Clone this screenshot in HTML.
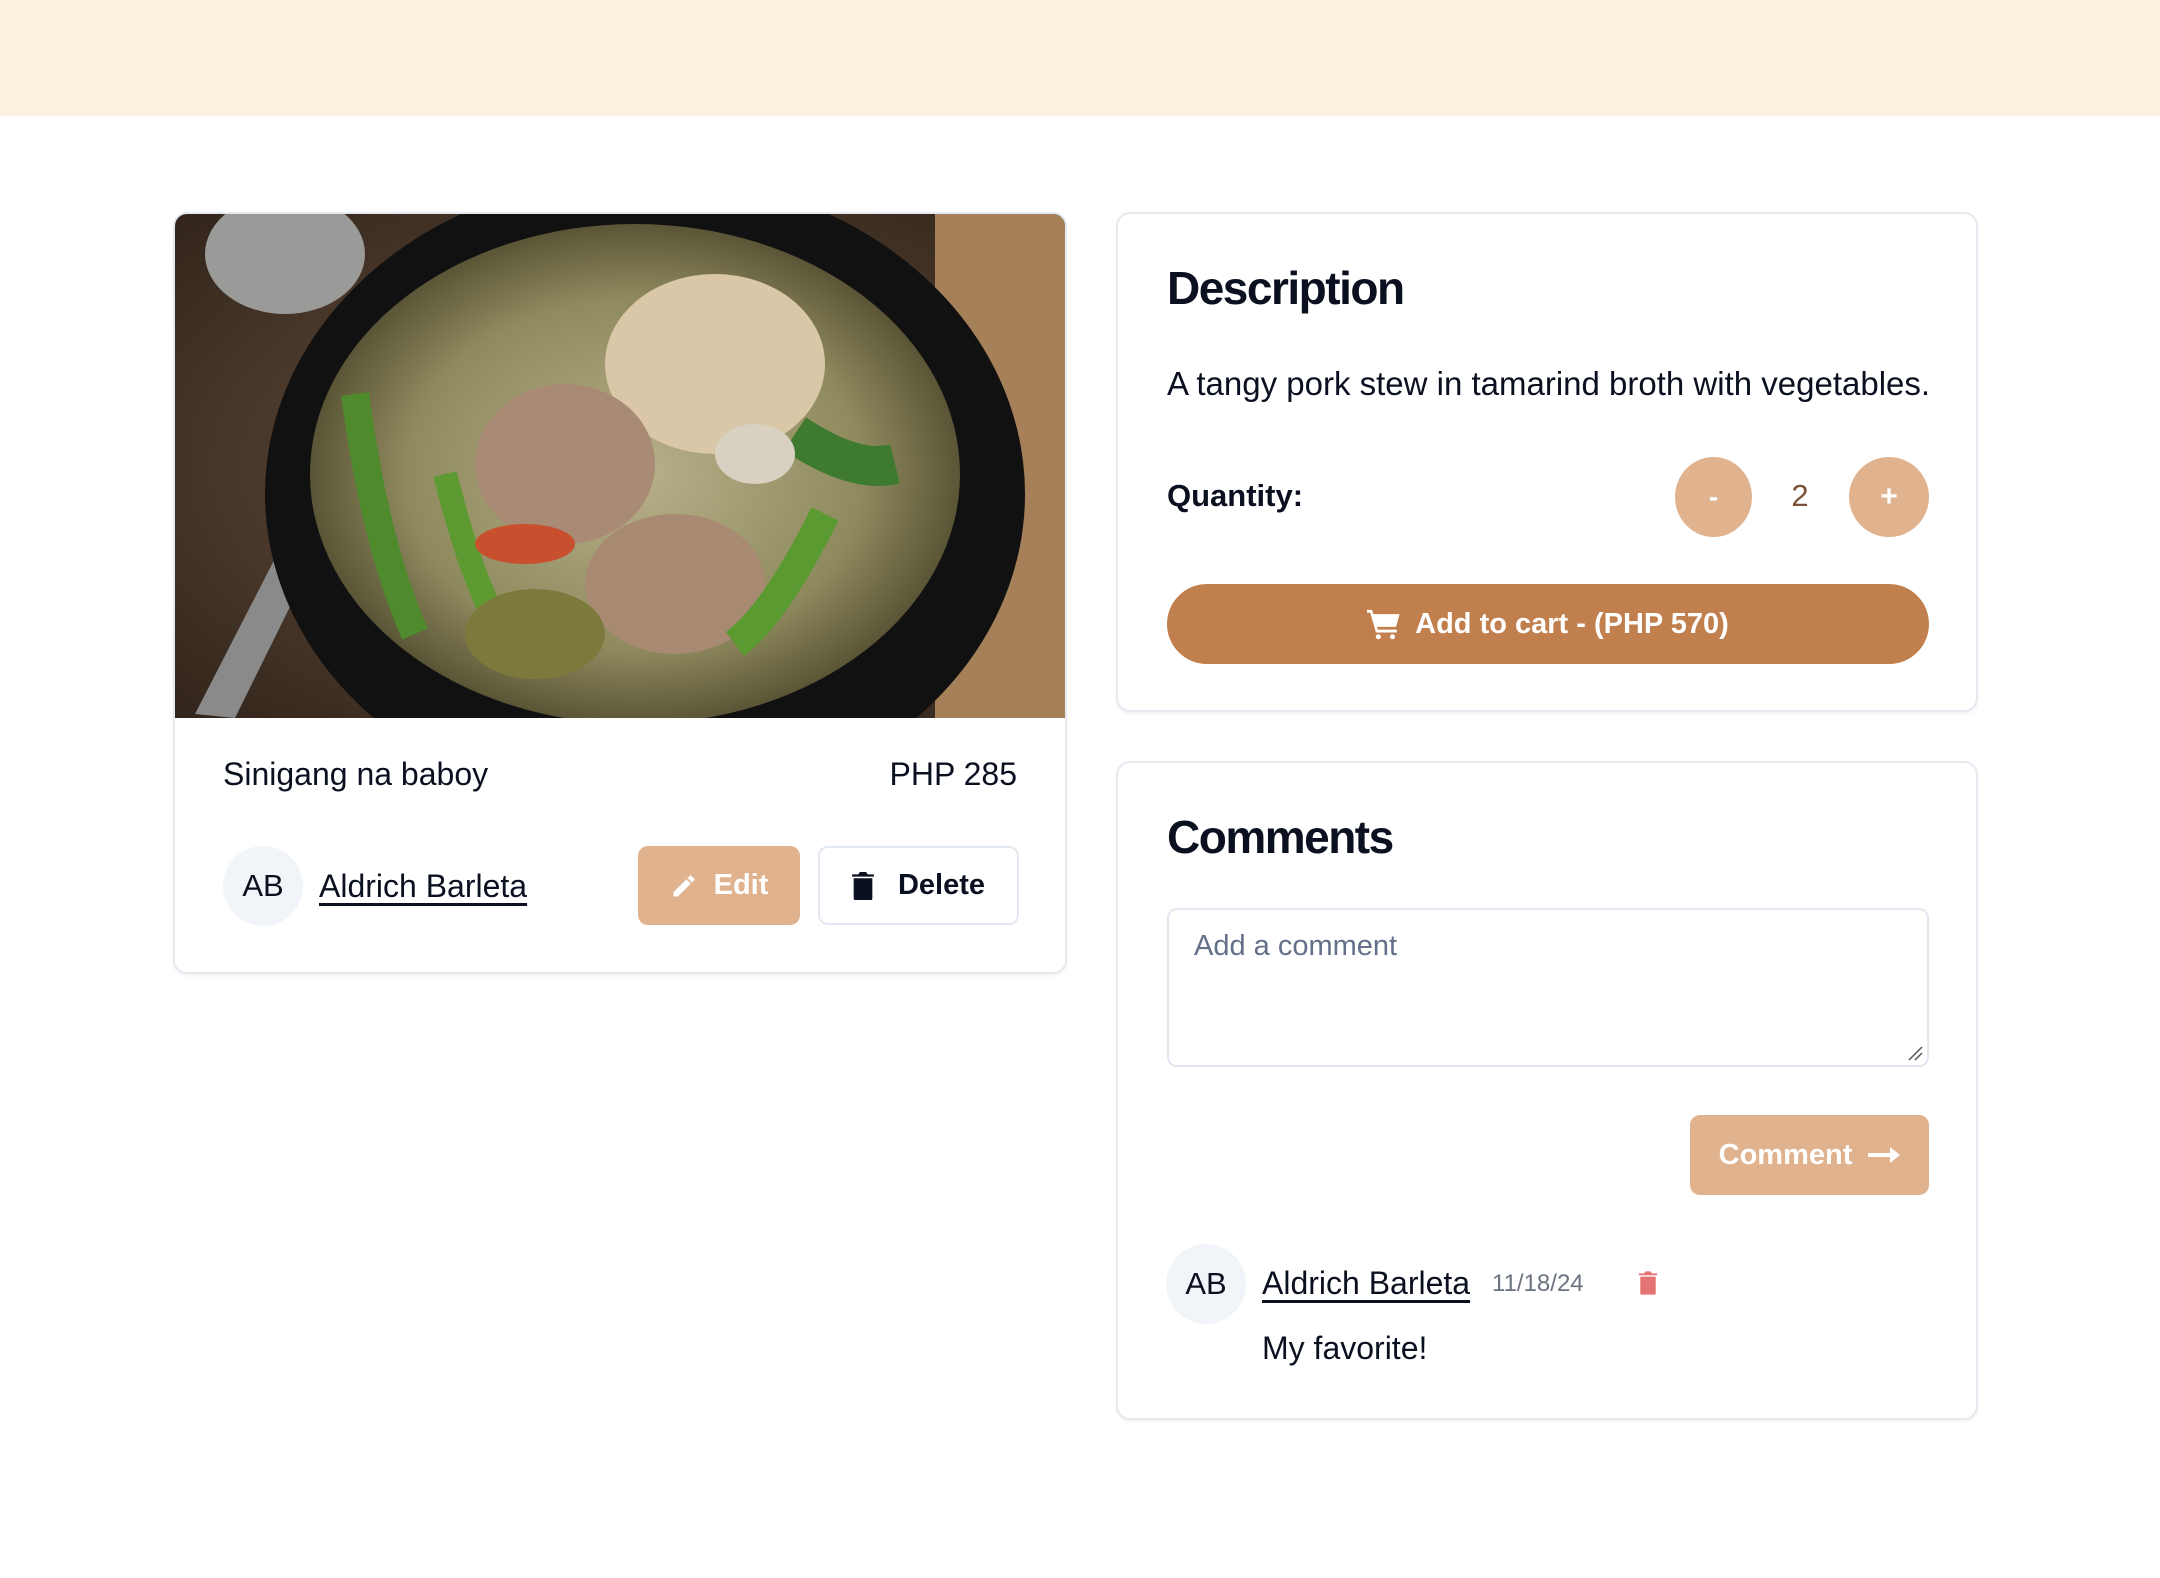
<!DOCTYPE html>
<html><head><meta charset="utf-8"><style>
*{box-sizing:border-box;margin:0;padding:0}
body{width:2160px;height:1578px;background:#fff;font-family:"Liberation Sans",sans-serif;color:#0b1020;position:relative;overflow:hidden}
.hdr{position:absolute;left:0;top:0;width:2160px;height:116px;background:#fcf0df}
.card{position:absolute;background:#fff;border:2px solid #e5e9f0;border-radius:14px;box-shadow:0 2px 3px rgba(0,0,0,.05)}
.abs{position:absolute}
.av{position:absolute;width:80px;height:80px;border-radius:50%;background:#f1f5f9;display:flex;align-items:center;justify-content:center;font-size:31px}
.btn{position:absolute;display:flex;align-items:center;justify-content:center;font-size:29px;font-weight:bold}
u{text-decoration-thickness:3px;text-underline-offset:6px}
</style></head><body>
<div class="hdr"></div>

<div class="card" style="left:173px;top:212px;width:894px;height:762px;overflow:hidden">
<svg width="894" height="504" style="display:block" viewBox="0 0 894 504">
<defs>
<radialGradient id="bg" cx="0.5" cy="0.5" r="0.8"><stop offset="0" stop-color="#6b5440"/><stop offset="1" stop-color="#2a1e16"/></radialGradient>
<radialGradient id="soup" cx="0.5" cy="0.5" r="0.5"><stop offset="0" stop-color="#b8b08a"/><stop offset="0.7" stop-color="#8f8a5e"/><stop offset="1" stop-color="#5a5536"/></radialGradient>
</defs>
<rect width="894" height="504" fill="url(#bg)"/>
<rect x="760" y="0" width="134" height="504" fill="#a58058"/>
<path d="M20 500 L200 150 L230 160 L60 504Z" fill="#8a8a8a"/>
<ellipse cx="110" cy="40" rx="80" ry="60" fill="#9a9a98"/>
<ellipse cx="470" cy="280" rx="380" ry="320" fill="#111"/>
<ellipse cx="460" cy="260" rx="325" ry="250" fill="url(#soup)"/>
<ellipse cx="540" cy="150" rx="110" ry="90" fill="#d9c7a8"/>
<ellipse cx="390" cy="250" rx="90" ry="80" fill="#a98a74"/>
<ellipse cx="500" cy="370" rx="90" ry="70" fill="#a88a72"/>
<path d="M180 180 Q200 330 240 420" stroke="#4f8a2c" stroke-width="28" fill="none"/>
<path d="M270 260 Q300 380 330 420" stroke="#5d9a32" stroke-width="24" fill="none"/>
<path d="M650 300 Q600 400 560 430" stroke="#5a9a30" stroke-width="30" fill="none"/>
<path d="M620 220 Q680 260 720 250" stroke="#3e7a30" stroke-width="40" fill="none"/>
<ellipse cx="350" cy="330" rx="50" ry="20" fill="#c8502e"/>
<ellipse cx="360" cy="420" rx="70" ry="45" fill="#7b7a3c"/>
<ellipse cx="580" cy="240" rx="40" ry="30" fill="#d8d0c0"/>
</svg>
<div class="abs" style="left:48px;top:540px;font-size:32px;line-height:40px">Sinigang na baboy</div>
<div class="abs" style="right:48px;top:540px;font-size:32px;line-height:40px">PHP 285</div>
<div class="av" style="left:48px;top:632px">AB</div>
<div class="abs" style="left:144px;top:652px;font-size:32px;line-height:40px"><u>Aldrich Barleta</u></div>
<div class="btn" style="left:463px;top:632px;width:162px;height:79px;background:#e0b28e;color:#fff;border-radius:10px">
<svg width="28" height="28" viewBox="0 0 24 24" style="margin-right:16px"><path d="M3 17.25V21h3.75L17.8 9.94l-3.75-3.75L3 17.25zM20.7 7.04a1 1 0 000-1.41l-2.34-2.34a1 1 0 00-1.41 0l-1.83 1.83 3.75 3.75 1.83-1.83z" fill="#fff"/></svg>Edit</div>
<div class="btn" style="left:643px;top:632px;width:201px;height:79px;background:#fff;border:2px solid #e2e8f0;border-radius:10px;color:#0b1020">
<svg width="22" height="28" viewBox="0 0 14 18" style="margin-right:24px"><path d="M1 4h12v13a1 1 0 01-1 1H2a1 1 0 01-1-1z M0 1.5h4l1-1.5h4l1 1.5h4V3H0z" fill="#0b1020"/></svg>Delete</div>
</div>

<div class="card" style="left:1116px;top:212px;width:862px;height:500px">
<div class="abs" style="left:49px;top:44px;font-size:46px;font-weight:bold;letter-spacing:-1.5px;line-height:60px">Description</div>
<div class="abs" style="left:49px;top:150px;font-size:33px;line-height:40px">A tangy pork stew in tamarind broth with vegetables.</div>
<div class="abs" style="left:49px;top:262px;font-size:31px;font-weight:bold;line-height:40px">Quantity:</div>
<div class="btn" style="left:557px;top:243px;width:77px;height:80px;border-radius:50%;background:#e0b28e;color:#fff;font-size:28px">-</div>
<div class="abs" style="left:660px;top:262px;width:44px;text-align:center;font-size:31px;color:#7b5236;line-height:40px">2</div>
<div class="btn" style="left:731px;top:243px;width:80px;height:80px;border-radius:50%;background:#e0b28e;color:#fff;font-size:30px">+</div>
<div class="btn" style="left:49px;top:370px;width:762px;height:80px;border-radius:40px;background:#c17f4d;color:#fff;font-size:29px">
<svg width="34" height="32" viewBox="0 0 24 22" style="margin-right:14px"><path d="M0 1h3.5l1 3H23l-2.5 9H7l.7 2H21v2H6.3L2.3 3H0z" fill="#fff"/><circle cx="8" cy="20" r="1.8" fill="#fff"/><circle cx="18" cy="20" r="1.8" fill="#fff"/></svg>Add to cart - (PHP 570)</div>
</div>

<div class="card" style="left:1116px;top:761px;width:862px;height:659px">
<div class="abs" style="left:49px;top:44px;font-size:46px;font-weight:bold;letter-spacing:-1.5px;line-height:60px">Comments</div>
<div class="abs" style="left:49px;top:145px;width:762px;height:159px;border:2px solid #e2e8f0;border-radius:10px">
<div class="abs" style="left:25px;top:16px;font-size:29px;color:#64708a;line-height:40px">Add a comment</div>
<svg class="abs" style="right:4px;bottom:4px" width="16" height="16"><path d="M2 15L15 2M8 15L15 8" stroke="#555" stroke-width="1.5"/></svg>
</div>
<div class="btn" style="left:572px;top:352px;width:239px;height:80px;border-radius:10px;background:#e0b28e;color:#fff">Comment
<svg width="32" height="18" viewBox="0 0 32 18" style="margin-left:16px"><path d="M0 7h22V1l10 8-10 8v-6H0z" fill="#fff"/></svg></div>
<div class="av" style="left:48px;top:481px">AB</div>
<div class="abs" style="left:144px;top:500px;font-size:32px;line-height:40px"><u>Aldrich Barleta</u></div>
<div class="abs" style="left:374px;top:505px;font-size:24px;color:#6b7280;line-height:32px">11/18/24</div>
<svg class="abs" style="left:521px;top:508px" width="18" height="24" viewBox="0 0 14 18"><path d="M1 4h12v13a1 1 0 01-1 1H2a1 1 0 01-1-1z M0 1.5h4l1-1.5h4l1 1.5h4V3H0z" fill="#e57373"/></svg>
<div class="abs" style="left:144px;top:565px;font-size:32px;line-height:40px">My favorite!</div>
</div>
</body></html>
